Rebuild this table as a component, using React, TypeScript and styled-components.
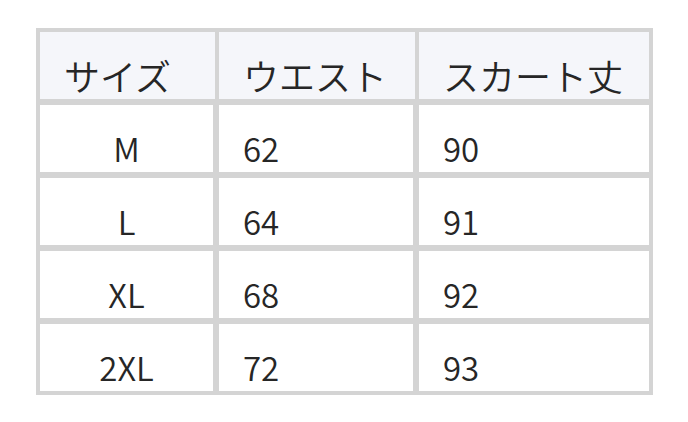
import React from "react";
import styled, { createGlobalStyle } from "styled-components";

const headers = ["サイズ", "ウエスト", "スカート丈"];

const rows = [
  ["M", "62", "90"],
  ["L", "64", "91"],
  ["XL", "68", "92"],
  ["2XL", "72", "93"],
];

function App() {
  return (
    <>
      <GlobalStyle />
      <Page>
        <SizeTable>
          {headers.map((h, i) => (
            <HeadCell key={h} last={i === headers.length - 1}>
              {h}
            </HeadCell>
          ))}
          {rows.map((row) =>
            row.map((value, i) => (
              <BodyCell key={row[0] + i} centered={i === 0}>
                {value}
              </BodyCell>
            ))
          )}
        </SizeTable>
      </Page>
    </>
  );
}

const GlobalStyle = createGlobalStyle`
  body {
    margin: 0;
    background: #ffffff;
    font-family: "Noto Sans CJK JP", "Noto Sans", sans-serif;
    font-weight: 350;
  }
`;

const Page = styled.div`
  padding: 28px 0 0 36px;
`;

const SizeTable = styled.div`
  display: grid;
  grid-template-columns: 173px 194px 230px;
  grid-auto-rows: 67px;
  gap: 6px;
  padding: 4px;
  width: max-content;
  background: #d4d4d4;
`;

const HeadCell = styled.div<{ last?: boolean }>`
  margin-right: ${(p) => (p.last ? "0" : "-2px")};
  padding: 18px 0 0 24px;
  background: #f5f6fa;
  color: #262626;
  font-size: 36px;
  line-height: 1.4;
  white-space: nowrap;
`;

const BodyCell = styled.div<{ centered?: boolean }>`
  padding: ${(p) => (p.centered ? "20px 0 0 0" : "20px 0 0 24px")};
  text-align: ${(p) => (p.centered ? "center" : "left")};
  background: #ffffff;
  color: #262626;
  font-size: 33px;
  line-height: 1.4;
`;

export default App;
